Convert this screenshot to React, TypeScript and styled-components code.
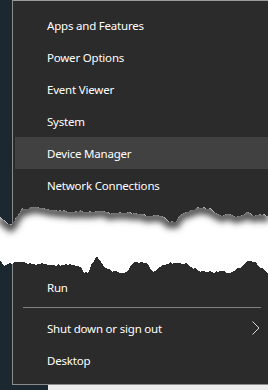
import React from "react";
import styled, { createGlobalStyle } from "styled-components";

const Global = createGlobalStyle`
  html, body { margin: 0; padding: 0; }
  body {
    background: #1c2830;
    font-family: "Segoe UI", "Noto Sans", "Open Sans", sans-serif;
    overflow: hidden;
  }
`;

const Page = styled.div`
  position: relative;
  width: 268px;
  height: 390px;
  overflow: hidden;
  display: flex;
  flex-direction: column;
`;

const Screen = styled.div`
  display: flex;
  flex-direction: row;
`;

const Desktop = styled.div`
  width: 12px;
  flex: none;
  background: #1c2830;
`;

const Menu = styled.div`
  flex: 1;
  background: #2b2b2b;
  border-left: 1px solid #8c8c8c;
  border-top: 1px solid #9a9a9a;
  border-bottom: 1px solid #8c8c8c;
  padding: 8px 0 8px 2px;
  display: flex;
  flex-direction: column;
`;

const Row = styled.div<{ $active?: boolean }>`
  height: 32px;
  display: flex;
  align-items: center;
  justify-content: space-between;
  padding: 0 8px 0 32px;
  background: ${(p) => (p.$active ? "#414141" : "transparent")};
  color: #ffffff;
  font-size: 11.5px;
  letter-spacing: -0.2px;
  white-space: nowrap;
`;

const Gap = styled.div`
  height: 38px;
`;

const Separator = styled.div`
  height: 1px;
  margin: 4px 7px 4px 8px;
  background: #7f7f7f;
`;

const BottomStrip = styled.div`
  height: 5px;
  display: flex;
`;

const StripDark = styled.div`
  width: 48px;
  background: #1c2830;
`;

const StripLight = styled.div`
  flex: 1;
  background: #ececec;
`;

const TearLayer = styled.svg`
  position: absolute;
  left: 0;
  top: 195px;
  width: 268px;
  height: 85px;
  pointer-events: none;
`;

const Chevron = () => (
  <svg width="8" height="14" viewBox="0 0 8 14">
    <polyline points="0.5,0.5 7,7 0.5,13.5" fill="none" stroke="#d8d8d8" strokeWidth="1" />
  </svg>
);

type P = [number, number];

const topEdge: P[] = [
  [0, 217], [4, 220], [8, 224], [11, 225], [14, 221], [18, 214], [22, 209], [28, 208],
  [36, 207], [44, 208], [50, 209], [54, 211], [60, 210], [70, 212], [80, 211], [90, 212],
  [100, 211], [110, 213], [120, 212], [130, 213], [140, 214], [148, 216], [158, 215],
  [165, 218], [170, 222], [176, 221], [180, 215], [186, 212], [192, 210], [198, 207],
  [204, 208], [210, 209], [216, 213], [222, 215], [230, 214], [236, 217], [242, 215],
  [248, 212], [254, 216], [260, 214], [268, 216],
];

const bottomEdge: P[] = [
  [0, 262], [4, 265], [8, 264], [12, 263], [16, 261], [20, 262], [26, 263], [32, 265],
  [40, 264], [50, 265], [60, 265], [70, 264], [78, 266], [84, 272], [88, 272], [92, 264],
  [97, 256], [101, 262], [106, 268], [112, 271], [120, 273], [127, 272], [133, 263],
  [140, 262], [147, 264], [153, 272], [158, 268], [163, 265], [170, 263], [180, 263],
  [187, 264], [193, 268], [200, 271], [210, 272], [220, 271], [228, 273], [234, 271],
  [240, 267], [246, 262], [251, 261], [255, 263], [260, 267], [264, 270], [268, 273],
];

function jag(pts: P[], seed: number, amp: number): P[] {
  const out: P[] = [];
  for (let i = 0; i < pts.length - 1; i++) {
    const [x0, y0] = pts[i];
    const [x1, y1] = pts[i + 1];
    for (let x = x0; x < x1; x += 2) {
      const t = (x - x0) / (x1 - x0);
      const n = Math.sin(x * 12.9898 + seed * 78.233) * 43758.5453;
      const r = (n - Math.floor(n)) * 2 - 1;
      out.push([x, Math.round(y0 + (y1 - y0) * t + r * amp)]);
    }
  }
  out.push(pts[pts.length - 1]);
  return out;
}

const Tear = () => {
  const t = jag(topEdge, 1, 0.8);
  const b = jag(bottomEdge, 2, 1);
  const paper = [...t, ...[...b].reverse()].map((p) => p.join(",")).join(" ");
  const topLine = t.map((p) => p.join(",")).join(" ");
  return (
    <TearLayer viewBox="0 195 268 85">
      <defs>
        <clipPath id="paper">
          <polygon points={paper} />
        </clipPath>
        <filter id="blur" x="-10%" y="-80%" width="120%" height="260%">
          <feGaussianBlur stdDeviation="3.2" />
        </filter>
      </defs>
      <polygon points={paper} fill="#ffffff" shapeRendering="crispEdges" />
      <g clipPath="url(#paper)">
        <polyline
          points={topLine}
          fill="none"
          stroke="#4a4a4a"
          strokeWidth="8"
          filter="url(#blur)"
          transform="translate(0,2)"
        />
      </g>
    </TearLayer>
  );
};

const topItems = [
  "Apps and Features",
  "Power Options",
  "Event Viewer",
  "System",
  "Device Manager",
  "Network Connections",
  "Disk Management",
];

export default function App() {
  return (
    <>
      <Global />
      <Page>
        <Screen>
          <Desktop />
          <Menu>
            {topItems.map((label) => (
              <Row key={label} $active={label === "Device Manager"}>
                {label}
              </Row>
            ))}
            <Gap />
            <Row>Run</Row>
            <Separator />
            <Row>
              Shut down or sign out
              <Chevron />
            </Row>
            <Row>Desktop</Row>
          </Menu>
        </Screen>
        <BottomStrip>
          <StripDark />
          <StripLight />
        </BottomStrip>
        <Tear />
      </Page>
    </>
  );
}
